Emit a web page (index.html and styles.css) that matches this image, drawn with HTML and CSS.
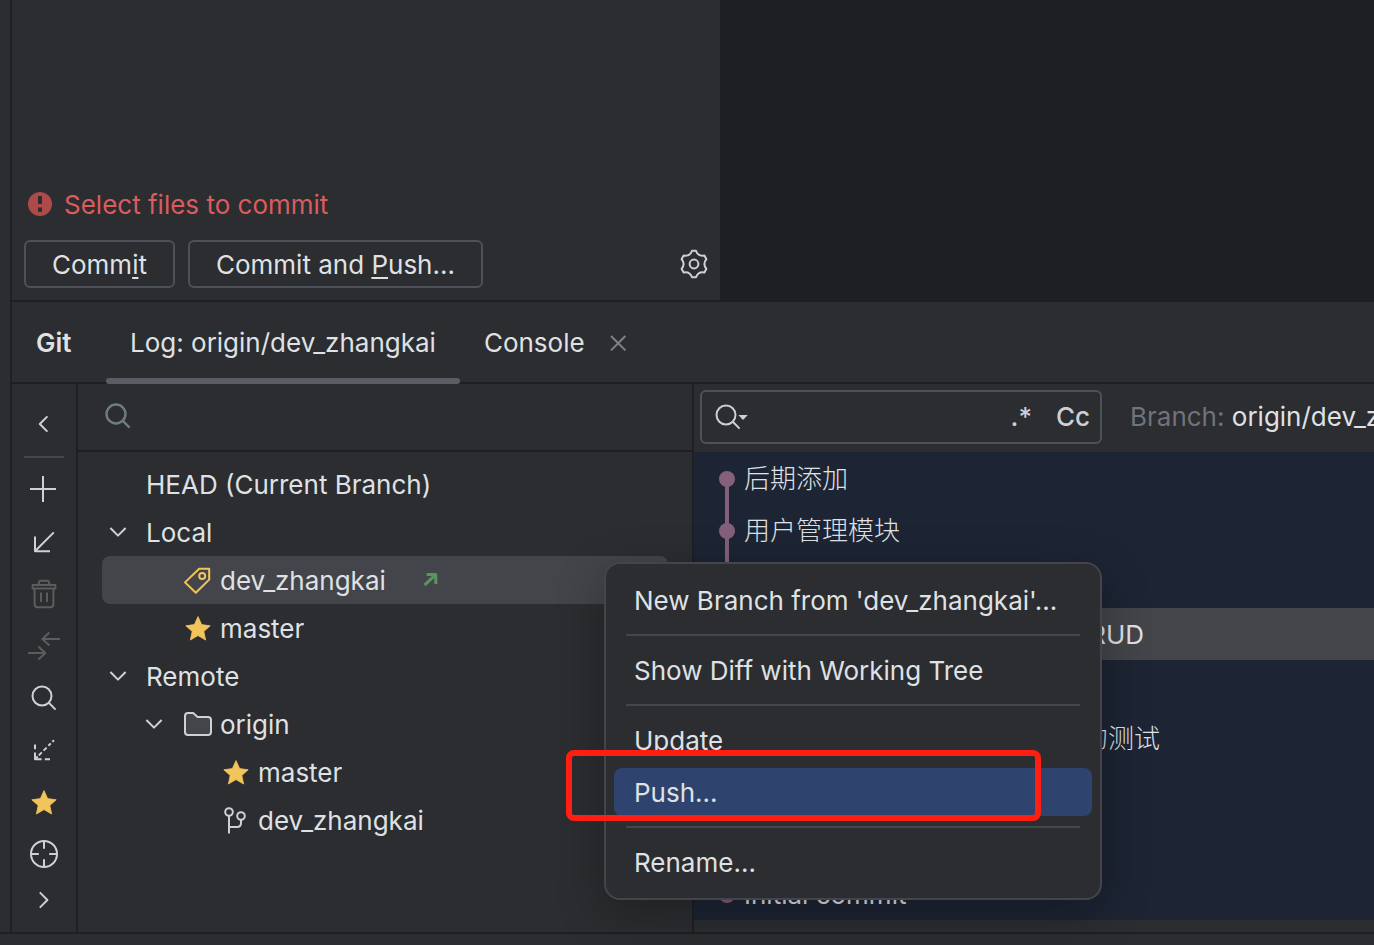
FILE: index.html
```html
<!DOCTYPE html>
<html lang="en">
<head>
    <meta charset="UTF-8">
    <meta name="viewport" content="width=device-width, initial-scale=1.0">
    <title>Git</title>
    <link rel="stylesheet" href="styles.css">
</head>
<body>
    <!-- shared icons -->
    <svg class="sprite" aria-hidden="true">
        <symbol id="chevron-down" viewBox="0 0 16 16"><path d="M4.2 6L8 9.8L11.8 6"/></symbol>
        <symbol id="star" viewBox="0 0 16 16"><path d="M8 2.3L9.8 6.3L14.1 6.9L10.9 9.7L11.8 14L8 11.8L4.2 14L5.1 9.7L1.9 6.9L6.2 6.3Z"/></symbol>
        <symbol id="search" viewBox="0 0 16 16"><circle cx="7" cy="7" r="4.75"/><path d="M10.4 10.4L13.8 13.8"/></symbol>
    </svg>

    <div class="window">
        <div class="stripe"></div>

        <div class="workspace">
            <div class="top">
                <section class="commit-panel">
                    <p class="error">
                        <svg class="error-icon" viewBox="0 0 12 12"><circle cx="6" cy="6" r="6"/><path d="M5 2h2v4H5zM5 7.7h2v2.2H5z"/></svg>
                        <span class="label">Select files to commit</span>
                    </p>
                    <div class="commit-actions">
                        <button class="btn">Comm<u>i</u>t</button>
                        <button class="btn">Commit and <u>P</u>ush...</button>
                        <button class="icon-btn settings" aria-label="Commit options">
                            <svg class="icon" viewBox="-8 -8 16 16"><path d="M-1 -6.6H1Q2.1 -3.6 5.2 -4.2L6.2 -2.4Q4.2 0 6.2 2.4L5.2 4.2Q2.1 3.6 1 6.6H-1Q-2.1 3.6 -5.2 4.2L-6.2 2.4Q-4.2 0 -6.2 -2.4L-5.2 -4.2Q-2.1 -3.6 -1 -6.6Z"/><circle r="2.2"/></svg>
                        </button>
                    </div>
                </section>
                <div class="editor"></div>
            </div>

            <section class="git">
                <header class="tabs">
                    <h1 class="title">Git</h1>
                    <button class="tab active">Log: origin/dev_zhangkai</button>
                    <button class="tab">Console</button>
                    <button class="icon-btn close" aria-label="Close Console">
                        <svg class="icon" viewBox="0 0 16 16"><path d="M4.5 5L11.7 12.2M11.7 5L4.5 12.2"/></svg>
                    </button>
                </header>

                <div class="git-body">
                    <div class="toolbar">
                        <button class="tool small" aria-label="Hide branches"><svg class="icon" viewBox="0 0 16 16"><path d="M9.7 4.2L5.9 8L9.7 11.8"/></svg></button>
                        <hr class="tool-sep">
                        <button class="tool" aria-label="New branch"><svg class="icon" viewBox="0 0 16 16"><path d="M7.5 1V14M1 7.5H14"/></svg></button>
                        <button class="tool" aria-label="Update selected"><svg class="icon" viewBox="0 0 16 16"><path d="M12.9 3.2L3.5 12.6M3.5 5.3V12.6H11"/></svg></button>
                        <button class="tool" aria-label="Delete branch" disabled><svg class="icon" viewBox="0 0 16 16"><path d="M2.3 3.5H13.7V5.2H2.3ZM5.4 3.3V2.6Q5.4 1.4 6.6 1.4H9.4Q10.6 1.4 10.6 2.6V3.3M3.3 5.2V13Q3.3 14.6 4.9 14.6H11.1Q12.7 14.6 12.7 13V5.2M6.5 7.2V12M9.5 7.2V12"/></svg></button>
                        <button class="tool" aria-label="Compare with current" disabled><svg class="icon" viewBox="0 0 16 16"><path d="M16 4.5H7.2M10.7 1.2L7.2 4.5L10.7 7.8M0 11.5H8.7M5.2 8.2L8.7 11.5L5.2 14.8"/></svg></button>
                        <button class="tool" aria-label="Show my branches"><svg class="icon"><use href="#search"/></svg></button>
                        <button class="tool" aria-label="Fetch"><svg class="icon" viewBox="0 0 16 16"><path d="M3.5 5.2V7.6M3.5 9.2V12.6H6.8M8.4 12.6H11M5.4 10.7L6.9 9.2M7.8 8.3L9.3 6.8M10.2 5.9L11.4 4.7M12.2 3.9L13 3.1M4.9 11.2L3.5 12.6"/></svg></button>
                        <button class="tool" aria-label="Favorite"><svg class="icon star"><use href="#star"/></svg></button>
                        <button class="tool" aria-label="Navigate to branch"><svg class="icon" viewBox="0 0 16 16"><circle cx="8" cy="8" r="6.5"/><path d="M8 1.5V5.4M8 10.6V14.5M1.5 8H5.4M10.6 8H14.5"/></svg></button>
                        <button class="tool small" aria-label="More"><svg class="icon" viewBox="0 0 16 16"><path d="M5.9 4.2L9.7 8L5.9 11.8"/></svg></button>
                    </div>

                    <div class="branches">
                        <label class="branch-search">
                            <svg class="icon"><use href="#search"/></svg>
                            <input type="text" aria-label="Search branches">
                        </label>
                        <ul class="tree">
                            <li class="node"><span class="toggle"></span><span class="label">HEAD (Current Branch)</span></li>
                            <li class="node"><svg class="icon toggle"><use href="#chevron-down"/></svg><span class="label">Local</span></li>
                            <li class="node level-2 selected">
                                <span class="toggle"></span>
                                <svg class="icon tag" viewBox="0 0 16 16"><path d="M8.6 2.4H13.6V7.8L6.9 14.4L1.5 9.2Z"/><circle cx="10.1" cy="6" r="1.5"/></svg>
                                <span class="label">dev_zhangkai</span>
                                <svg class="icon outgoing" viewBox="0 0 16 16"><path d="M5.3 10.6L10.8 5.3M6.3 5.2H10.9V10"/></svg>
                            </li>
                            <li class="node level-2"><span class="toggle"></span><svg class="icon star"><use href="#star"/></svg><span class="label">master</span></li>
                            <li class="node"><svg class="icon toggle"><use href="#chevron-down"/></svg><span class="label">Remote</span></li>
                            <li class="node level-2">
                                <svg class="icon toggle"><use href="#chevron-down"/></svg>
                                <svg class="icon folder" viewBox="0 0 16 16"><path d="M1.5 4Q1.5 2.5 3 2.5H5.6L7.8 4.5H13Q14.5 4.5 14.5 6V12Q14.5 13.5 13 13.5H3Q1.5 13.5 1.5 12Z"/></svg>
                                <span class="label">origin</span>
                            </li>
                            <li class="node level-3"><span class="toggle"></span><svg class="icon star"><use href="#star"/></svg><span class="label">master</span></li>
                            <li class="node level-3">
                                <span class="toggle"></span>
                                <svg class="icon" viewBox="0 0 16 16"><circle cx="4.5" cy="4" r="1.9"/><circle cx="10.5" cy="6" r="1.9"/><path d="M4.5 5.9V14.8M4.5 11.5H8.5Q10.5 11.5 10.5 9.5V7.9"/></svg>
                                <span class="label">dev_zhangkai</span>
                            </li>
                        </ul>
                    </div>

                    <div class="log">
                        <div class="log-toolbar">
                            <div class="log-search">
                                <svg class="icon wide" viewBox="0 0 18 16"><circle cx="7" cy="7" r="4.75"/><path d="M10.4 10.4L13.8 13.8"/><path class="solid" d="M13.2 7H17.9L15.5 9.5Z"/></svg>
                                <input type="text" aria-label="Search commits">
                                <button class="option">.*</button>
                                <button class="option">Cc</button>
                            </div>
                            <button class="filter"><span class="filter-name">Branch:</span> origin/dev_zhangkai</button>
                        </div>
                        <ol class="commits">
                            <li class="commit first"><span class="message cjk">后期添加</span></li>
                            <li class="commit"><span class="message cjk">用户管理模块</span></li>
                            <li class="commit"></li>
                            <li class="commit selected"><span class="message long">CRUD</span></li>
                            <li class="commit"></li>
                            <li class="commit"><span class="message cjk longer">的测试</span></li>
                            <li class="commit"></li>
                            <li class="commit"></li>
                            <li class="commit last"><span class="message">Initial commit</span></li>
                        </ol>
                    </div>

                    <!-- context menu of the selected branch -->
                    <div class="menu">
                        <button class="menu-item">New Branch from 'dev_zhangkai'...</button>
                        <hr class="menu-sep">
                        <button class="menu-item">Show Diff with Working Tree</button>
                        <hr class="menu-sep">
                        <button class="menu-item">Update</button>
                        <button class="menu-item current">Push...</button>
                        <hr class="menu-sep">
                        <button class="menu-item">Rename...</button>
                        <div class="marker"></div>
                    </div>
                </div>
            </section>
        </div>
    </div>
    <footer class="status-bar"></footer>
</body>
</html>
```
FILE: styles.css
```css
* {
    box-sizing: border-box;
}

body {
    margin: 0;
    min-height: 100vh;
    display: flex;
    flex-direction: column;
    overflow: hidden;
    background-color: #2b2d30;
    color: #dfe1e5;
    font-family: Inter, "Noto Sans CJK SC", sans-serif;
    font-size: 26px;
    line-height: 32px;
}

button, input {
    font: inherit;
    color: inherit;
    background: none;
    border: none;
    padding: 0;
    margin: 0;
}

input {
    flex: 1;
    width: 0;
    min-width: 0;
    outline: none;
}

.sprite {
    position: absolute;
    width: 0;
    height: 0;
}

.icon {
    display: block;
    flex: none;
    width: 32px;
    height: 32px;
    fill: none;
    stroke: #ced0d6;
    stroke-width: 1;
    stroke-linejoin: round;
}

.icon.wide {
    width: 36px;
}

.icon .solid {
    fill: #ced0d6;
    stroke: none;
}

.star {
    fill: #f2c55c;
    stroke: #f2c55c;
    stroke-width: 0.4;
}

.label {
    padding-top: 2px;
}

.window {
    flex: 1;
    display: flex;
}

.stripe {
    flex: 0 0 12px;
    border-right: 2px solid #1e1f22;
}

.workspace {
    flex: 1;
    min-width: 0;
    display: flex;
    flex-direction: column;
}

.status-bar {
    height: 13px;
    border-top: 2px solid #1e1f22;
}

/* commit panel */
.top {
    flex: 1;
    display: flex;
}

.commit-panel {
    flex: 0 0 52%;
    display: flex;
    flex-direction: column;
    justify-content: flex-end;
    padding: 12px;
}

.error {
    display: flex;
    align-items: center;
    gap: 12px;
    margin: 0 4px 19px;
    color: #db5c5c;
}

.error-icon {
    width: 24px;
    height: 24px;
}

.error-icon circle {
    fill: #ad4b4b;
}

.error-icon path {
    fill: #2b2d30;
}

.commit-actions {
    display: flex;
    align-items: center;
    gap: 13px;
}

.btn {
    height: 48px;
    padding: 2px 26px 0;
    border: 2px solid #4e5157;
    border-radius: 6px;
}

u {
    text-decoration-thickness: 2px;
    text-underline-offset: 3px;
}

.settings {
    margin-left: auto;
    margin-right: -2px;
}

.editor {
    flex: 1;
    background-color: #1e1f22;
}

/* git tool window */
.git {
    border-top: 2px solid #1e1f22;
}

.tabs {
    display: flex;
    height: 82px;
    padding-left: 24px;
    border-bottom: 2px solid #1e1f22;
}

.title {
    width: 70px;
    margin: 0;
    font-size: 26px;
    font-weight: 600;
    line-height: 82px;
}

.tab {
    height: 82px;
    padding: 6px 24px 0;
    border-bottom: 6px solid transparent;
    white-space: nowrap;
}

.tab.active {
    position: relative;
}

.tab.active::after {
    content: "";
    position: absolute;
    left: 0;
    right: 0;
    bottom: -6px;
    height: 6px;
    border-radius: 3px;
    background-color: #5a5d63;
}

.close {
    align-self: center;
    margin-left: -7px;
}

.close .icon {
    stroke: #7d8188;
}

.git-body {
    position: relative;
    display: flex;
}

.toolbar {
    flex: 0 0 66px;
    display: flex;
    flex-direction: column;
    align-items: center;
    padding: 20px 0 12px;
    border-right: 2px solid #1e1f22;
}

.tool {
    display: flex;
    align-items: center;
    height: 52px;
}

.tool.small {
    height: 40px;
}

.tool:disabled .icon {
    stroke: #5b5c5e;
}

.tool-sep {
    width: 40px;
    height: 2px;
    margin: 12px 0 6px;
    border: none;
    background-color: #43454a;
}

/* branches */
.branches {
    flex: 0 0 616px;
    border-right: 2px solid #1e1f22;
}

.branch-search {
    display: flex;
    align-items: center;
    height: 68px;
    padding: 0 24px 2px;
    border-bottom: 2px solid #1e1f22;
}

.branch-search .icon {
    stroke: #6f7b82;
    stroke-width: 1.2;
}

.tree {
    margin: 0;
    padding: 8px 24px;
    list-style: none;
}

.node {
    display: flex;
    align-items: center;
    gap: 6px;
    height: 48px;
    border-radius: 8px;
}

.node.selected {
    background-color: #43454a;
}

.toggle {
    width: 32px;
    margin-right: 6px;
}

.level-2 {
    padding-left: 36px;
}

.level-3 {
    padding-left: 74px;
}

.tag {
    stroke: #f2c55c;
}

.folder {
    fill: #43454a;
}

.outgoing {
    margin-left: 22px;
    stroke: #57965c;
    stroke-width: 1.5;
}

/* log */
.log {
    flex: 1;
    min-width: 0;
}

.log-toolbar {
    display: flex;
    align-items: center;
    gap: 28px;
    height: 68px;
    padding: 0 0 2px 6px;
    overflow: hidden;
    white-space: nowrap;
}

.log-search {
    flex: 0 0 402px;
    display: flex;
    align-items: center;
    gap: 24px;
    height: 54px;
    padding: 0 10px;
    border: 2px solid #4e5157;
    border-radius: 6px;
}

.option {
    color: #ced0d6;
    font-weight: 500;
}

.filter-name {
    color: #6f737a;
}

.commits {
    margin: 0;
    padding: 0;
    list-style: none;
    background-color: #1d2433;
}

.commit {
    position: relative;
    display: flex;
    align-items: center;
    height: 52px;
    padding: 2px 0 0 50px;
}

.commit.selected {
    background-color: #43454a;
}

/* graph line and node */
.commit::before {
    content: "";
    position: absolute;
    left: 31px;
    top: 0;
    bottom: 0;
    width: 4px;
    background-color: #84607a;
}

.commit.first::before {
    top: 26px;
}

.commit.last::before {
    bottom: 26px;
}

.commit::after {
    content: "";
    position: absolute;
    left: 25px;
    top: 19px;
    width: 16px;
    height: 16px;
    border-radius: 50%;
    background-color: #84607a;
}

.message.cjk {
    font-weight: 300;
}

.message.long {
    width: 400px;
    text-align: right;
}

.message.longer {
    width: 416px;
    text-align: right;
}

/* context menu */
.menu {
    position: absolute;
    left: 592px;
    top: 178px;
    width: 498px;
    display: flex;
    flex-direction: column;
    padding: 10px 8px;
    background-color: #2b2d30;
    border: 2px solid #43454a;
    border-radius: 16px;
    box-shadow: 0 12px 48px rgba(0, 0, 0, 0.3);
}

.menu-item {
    height: 48px;
    margin: 2px 0;
    padding: 2px 20px 0;
    border-radius: 8px;
    text-align: left;
}

.menu-item.current {
    background-color: #2e436e;
}

.menu-sep {
    height: 2px;
    margin: 8px 12px;
    border: none;
    background-color: #43454a;
}

.marker {
    position: absolute;
    left: -40px;
    top: 186px;
    width: 475px;
    height: 71px;
    border: 6px solid #ff1f12;
    border-radius: 8px;
    pointer-events: none;
}
```
